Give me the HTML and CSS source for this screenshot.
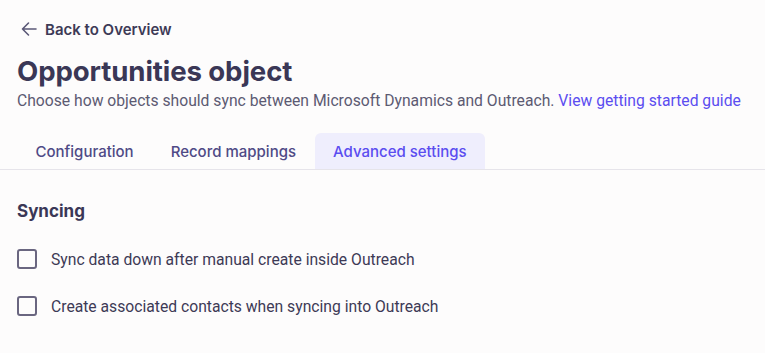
FILE: index.html
```html
<!DOCTYPE html>
<html>
<head>
<meta charset="utf-8">
<link rel="stylesheet" href="styles.css">
</head>
<body>
<div class="page">
  <header class="head">
    <a class="back" href="#">
      <svg width="18" height="18" viewBox="0 0 18 18" fill="none" stroke="#5b5877" stroke-width="1.6" stroke-linecap="round" stroke-linejoin="round"><path d="M16 9H2.5M8.5 3L2.5 9l6 6"/></svg>
      <span>Back to Overview</span>
    </a>
    <h1 class="title">Opportunities object</h1>
    <p class="sub">Choose how objects should sync between Microsoft Dynamics and Outreach. <a class="link" href="#">View getting started guide</a></p>
  </header>
  <nav class="tabs">
    <div class="tab">Configuration</div>
    <div class="tab">Record mappings</div>
    <div class="tab active">Advanced settings</div>
  </nav>
  <section class="content">
    <h2 class="section-title">Syncing</h2>
    <label class="check"><span class="box"></span><span>Sync data down after manual create inside Outreach</span></label>
    <label class="check"><span class="box"></span><span>Create associated contacts when syncing into Outreach</span></label>
  </section>
</div>
</body>
</html>
```
FILE: styles.css
```css
html, body { margin: 0; padding: 0; }
body { background: #fdfcfc; font-family: Roboto, "Noto Sans", sans-serif; color: #3d3a56; }
.page { padding-top: 18px; }
.head { padding: 0 17px; }
.back { display: flex; align-items: center; gap: 7px; text-decoration: none; color: #3d3a56; font-family: Inter, sans-serif; font-weight: 600; font-size: 15px; height: 22px; padding-left: 3px; }
.title { margin: 14px 0 0; font-family: Inter, sans-serif; font-weight: 700; font-size: 27.6px; line-height: 34px; color: #3a3756; letter-spacing: -0.1px; }
.sub { margin: 2px 0 0; font-size: 15.7px; line-height: 22px; color: #5c5a72; }
.link { color: #5b4df0; text-decoration: none; }
.tabs { display: flex; margin-top: 21px; padding-left: 17px; border-bottom: 1px solid #e6e4ea; }
.tab { padding: 0 18.5px; height: 36px; display: flex; align-items: center; font-family: Inter, sans-serif; font-weight: 500; font-size: 15px; color: #4f4a86; border-radius: 6px 6px 0 0; }
.tab.active { background: #efeefd; color: #5b4df0; }
.content { padding: 29px 17px 0; }
.section-title { margin: 0; font-family: Inter, sans-serif; font-weight: 700; font-size: 17px; line-height: 24px; color: #3a3756; }
.check { display: flex; align-items: center; gap: 14px; margin-top: 24px; font-size: 15.7px; color: #3d3a56; height: 24px; }
.check + .check { margin-top: 23px; }
.box { width: 16px; height: 16px; border: 2px solid #6a6680; border-radius: 3px; flex: none; }
```
